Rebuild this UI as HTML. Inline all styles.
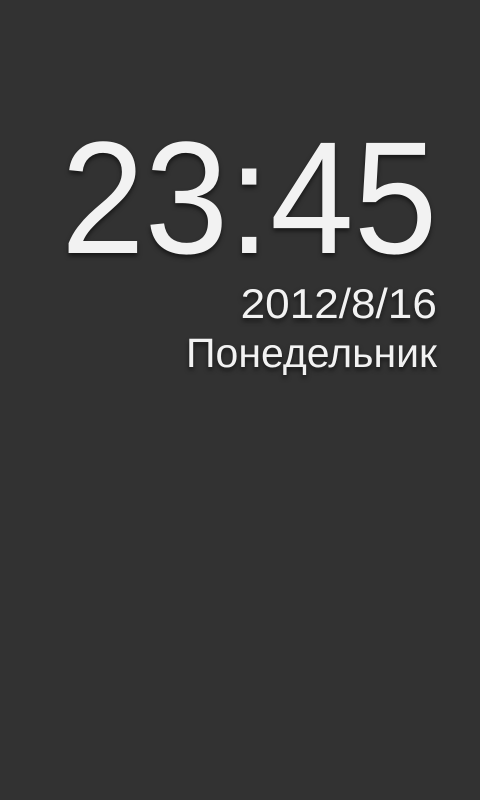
<!DOCTYPE html>
<html><head><meta charset="utf-8"><style>
html,body{margin:0;width:480px;height:800px;background:#323232;overflow:hidden}
.t{position:absolute;right:43px;color:#f2f2f2;font-family:"Liberation Sans",sans-serif;white-space:nowrap;text-shadow:0 3px 5px rgba(0,0,0,.55);transform-origin:right top}
#time{top:118px;font-size:160px;line-height:1;transform:scaleX(0.94)}
#date{top:283px;font-size:42px;line-height:1;transform:scaleX(1.05)}
#day{top:333px;font-size:41px;line-height:1}
</style></head><body>
<div class="t" id="time">23:45</div>
<div class="t" id="date">2012/8/16</div>
<div class="t" id="day">Понедельник</div>
</body></html>
